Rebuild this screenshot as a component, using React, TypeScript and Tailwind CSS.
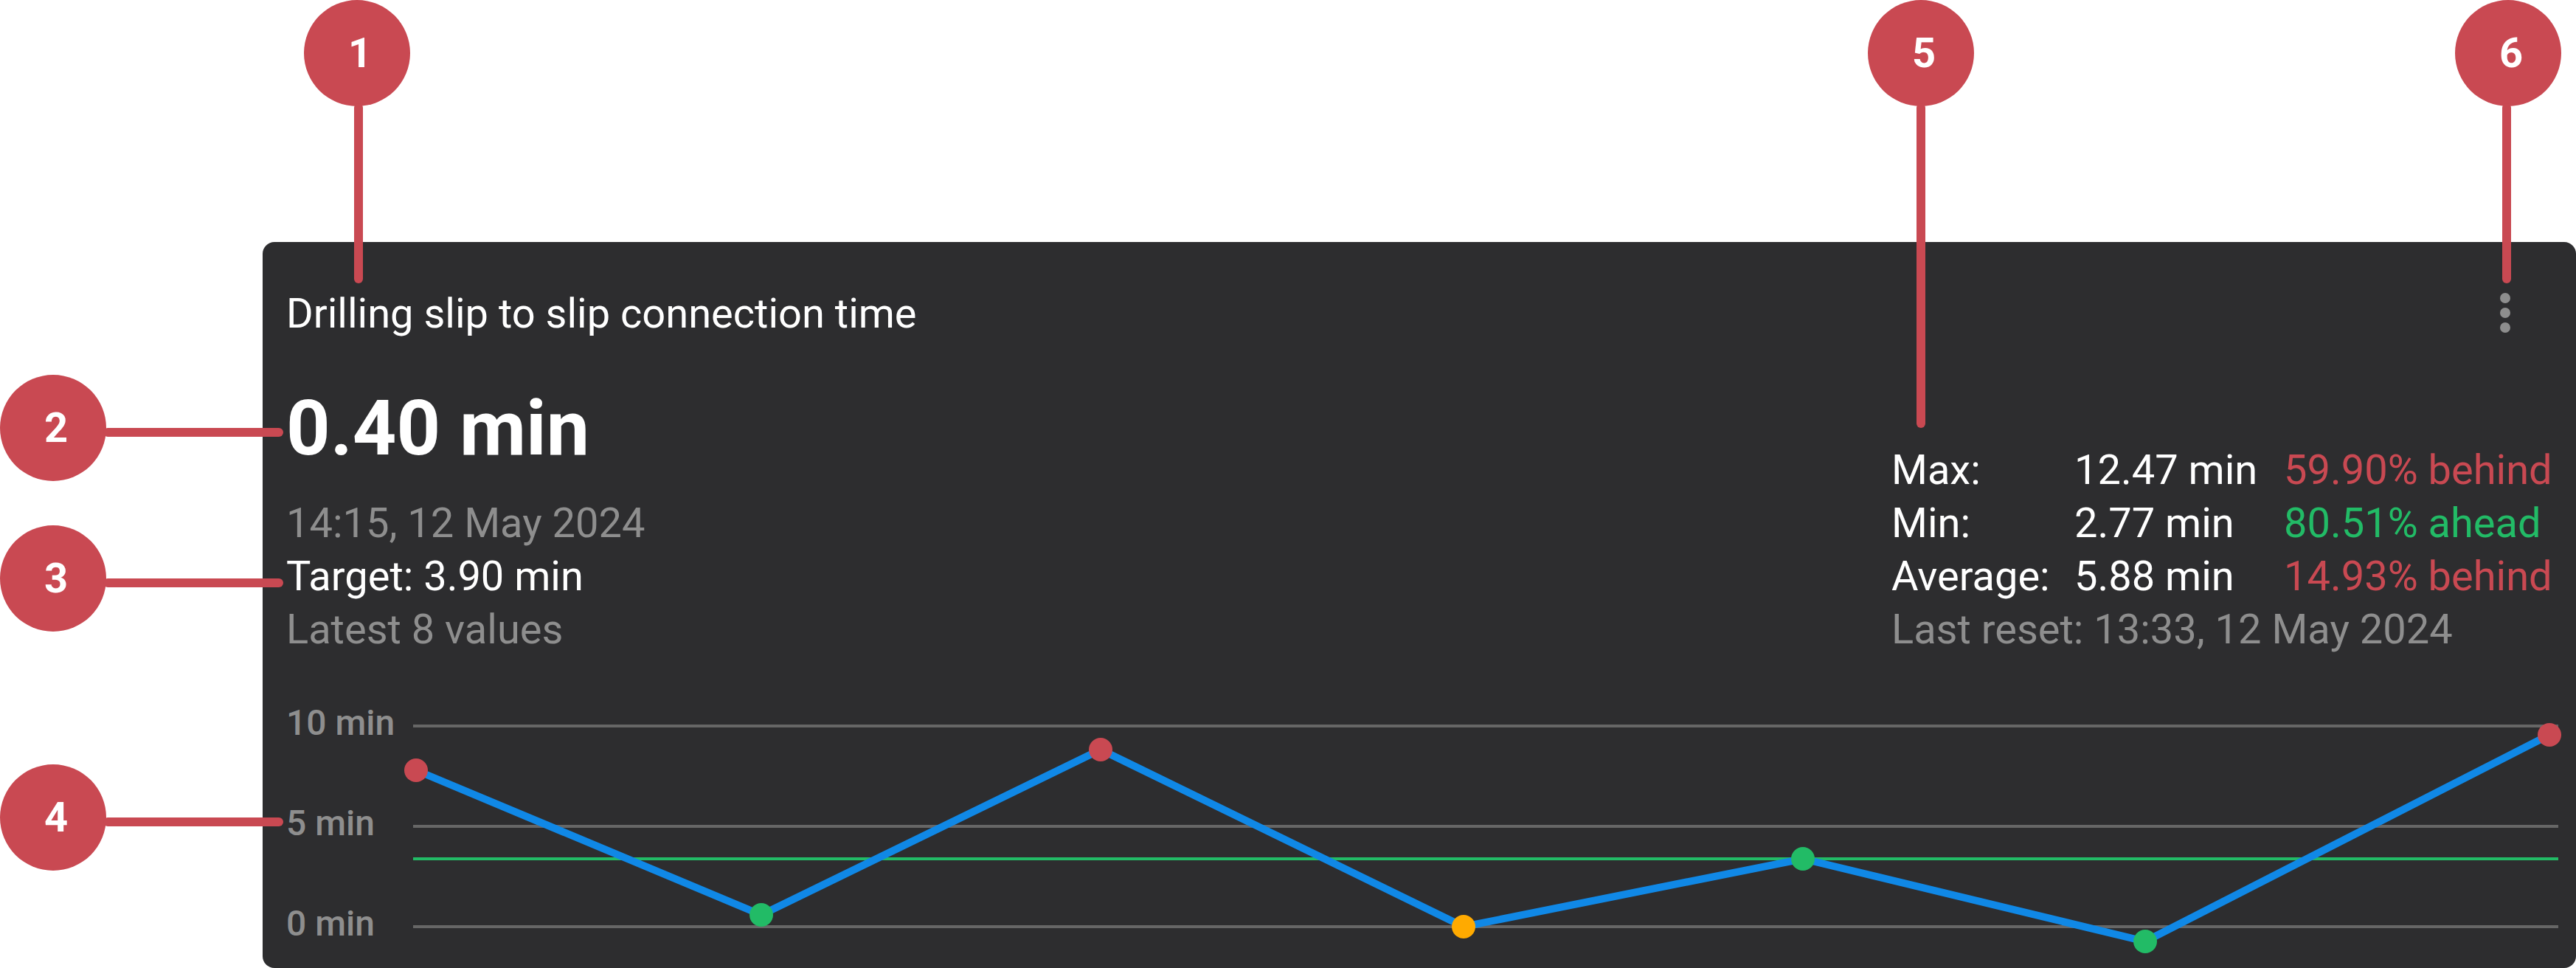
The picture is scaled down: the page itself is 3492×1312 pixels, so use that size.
const rowText = "text-[56px] leading-[72px]";

const points = [
  { x: 4, y: 132, color: "#c94952" },
  { x: 472, y: 328, color: "#22bb66" },
  { x: 932, y: 104, color: "#c94952" },
  { x: 1424, y: 344, color: "#ffaa00" },
  { x: 1884, y: 252, color: "#22bb66" },
  { x: 2348, y: 364, color: "#22bb66" },
  { x: 2896, y: 84, color: "#c94952" },
];

const stats = [
  { label: "Max:", value: "12.47 min", delta: "59.90% behind", color: "text-[#c94952]" },
  { label: "Min:", value: "2.77 min", delta: "80.51% ahead", color: "text-[#22bb66]" },
  { label: "Average:", value: "5.88 min", delta: "14.93% behind", color: "text-[#c94952]" },
];

// numbered marker with its leader line, laid over the card
function Callout({ n, className, lineClass }: { n: number; className: string; lineClass: string }) {
  return (
    <div className={`absolute flex ${className}`}>
      <div className="flex h-[144px] w-[144px] shrink-0 items-center justify-center rounded-full bg-[#c94952] pl-[8px] text-[56px] font-bold text-white">
        {n}
      </div>
      <div className={`rounded-full bg-[#c94952] ${lineClass}`} />
    </div>
  );
}

function Chart() {
  return (
    <div className="flex h-[400px]">
      <div className="w-[172px] shrink-0 whitespace-nowrap text-[48px] font-medium text-[#8e8e8e]">
        <div className="flex h-[136px] items-center">10 min</div>
        <div className="flex h-[136px] items-center">5 min</div>
        <div className="flex h-[136px] items-center">0 min</div>
      </div>
      <svg width="2908" height="400" viewBox="0 0 2908 400" className="shrink-0 overflow-visible">
        <line x1="0" x2="2908" y1="72" y2="72" stroke="#666666" strokeWidth="4" />
        <line x1="0" x2="2908" y1="208" y2="208" stroke="#666666" strokeWidth="4" />
        <line x1="0" x2="2908" y1="344" y2="344" stroke="#666666" strokeWidth="4" />
        <line x1="0" x2="2908" y1="252" y2="252" stroke="#22bb66" strokeWidth="4" />
        <polyline
          points={points.map((p) => `${p.x},${p.y}`).join(" ")}
          fill="none"
          stroke="#1088e6"
          strokeWidth="10"
        />
        {points.map((p) => (
          <circle key={p.x} cx={p.x} cy={p.y} r="16" fill={p.color} />
        ))}
      </svg>
    </div>
  );
}

export default function App() {
  return (
    <div className="relative h-[1312px] w-[3492px] bg-white pl-[356px] pt-[328px] font-['Roboto',sans-serif]">
      <div className="h-[984px] w-[3136px] rounded-[16px] bg-[#2d2d2f] pl-[32px] pr-[24px] pt-[61px] text-white">
        <div className="flex justify-between">
          <div className={rowText}>Drilling slip to slip connection time</div>
          <div className="mr-[65px] mt-[8px] flex flex-col gap-[6px]">
            <div className="h-[14px] w-[14px] rounded-full bg-[#8e8e8e]" />
            <div className="h-[14px] w-[14px] rounded-full bg-[#8e8e8e]" />
            <div className="h-[14px] w-[14px] rounded-full bg-[#8e8e8e]" />
          </div>
        </div>

        <div className="mt-[52px] flex items-end justify-between">
          <div>
            <div className="text-[104px] font-bold leading-[136px]">0.40 min</div>
            <div className={`mt-[24px] text-[#8e8e8e] ${rowText}`}>14:15, 12 May 2024</div>
            <div className={rowText}>Target: 3.90 min</div>
            <div className={`text-[#8e8e8e] ${rowText}`}>Latest 8 values</div>
          </div>
          <div className={`w-[904px] ${rowText}`}>
            {stats.map((s) => (
              <div key={s.label} className="grid grid-cols-[248px_284px_1fr] whitespace-nowrap">
                <div>{s.label}</div>
                <div>{s.value}</div>
                <div className={s.color}>{s.delta}</div>
              </div>
            ))}
            <div className="text-[#8e8e8e]">Last reset: 13:33, 12 May 2024</div>
          </div>
        </div>

        <div className="mt-[23px]">
          <Chart />
        </div>
      </div>

      <Callout n={1} className="left-[412px] top-0 flex-col items-center" lineClass="-mt-[4px] ml-[4px] h-[244px] w-[12px]" />
      <Callout n={2} className="left-0 top-[508px] items-center" lineClass="-ml-[4px] mt-[12px] h-[12px] w-[244px]" />
      <Callout n={3} className="left-0 top-[712px] items-center" lineClass="-ml-[4px] mt-[12px] h-[12px] w-[244px]" />
      <Callout n={4} className="left-0 top-[1036px] items-center" lineClass="-ml-[4px] mt-[12px] h-[12px] w-[244px]" />
      <Callout n={5} className="left-[2532px] top-0 flex-col items-center" lineClass="-mt-[4px] h-[440px] w-[12px]" />
      <Callout n={6} className="left-[3328px] top-0 flex-col items-center" lineClass="-mt-[4px] -ml-[4px] h-[244px] w-[12px]" />
    </div>
  );
}
